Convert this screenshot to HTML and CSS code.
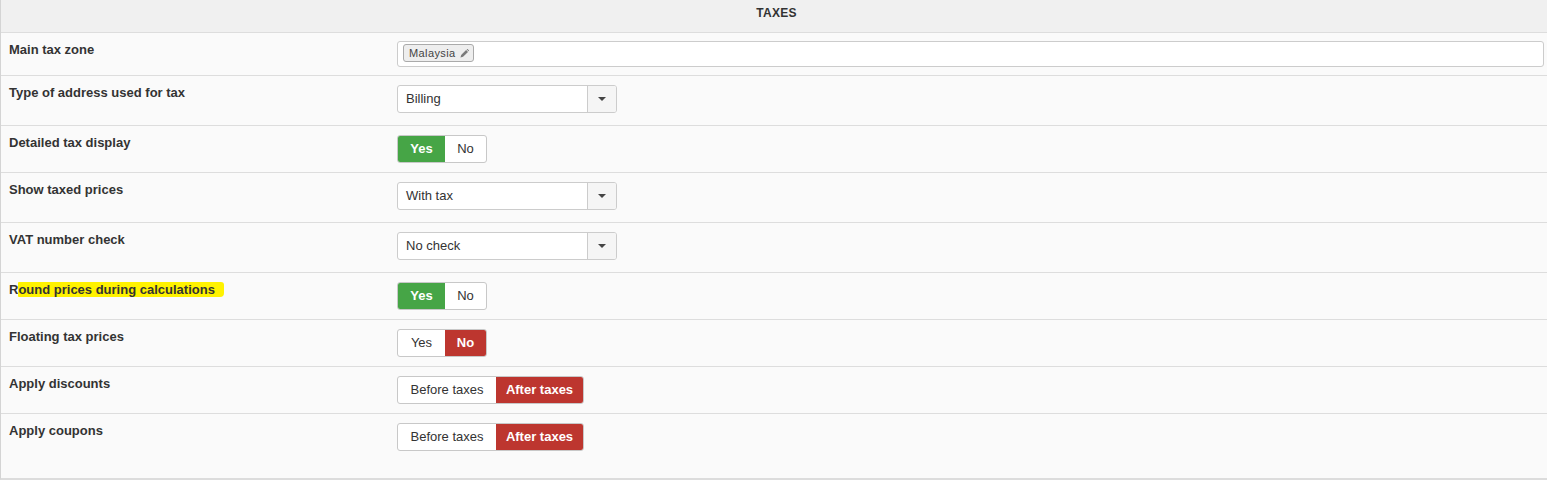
FILE: index.html
```html
<!DOCTYPE html>
<html>
<head>
	<title>Taxes</title>
	<meta http-equiv="content-type" content="text/html; charset=UTF-8">
	<link rel="stylesheet" href="styles.css">
</head>
<body>
	<div class="panel">
		<div class="panel-title">TAXES</div>

		<div class="row row-tight">
			<div class="key">Main tax zone</div>
			<div class="field">
				<div class="tagbox">
					<span class="tag">Malaysia
						<svg class="pencil" width="9" height="9" viewBox="0 0 10 10">
							<polygon points="0.5,9.5 1.3,6.6 6.8,1.1 8.9,3.2 3.4,8.7" fill="#7a7a7a"/>
							<polygon points="7.4,0.5 8.1,-0.2 10.2,1.9 9.5,2.6" fill="#7a7a7a"/>
						</svg>
					</span>
				</div>
			</div>
		</div>

		<div class="row row-select">
			<div class="key">Type of address used for tax</div>
			<div class="field">
				<div class="select"><span class="select-text">Billing</span><span class="select-arrow"><i class="caret"></i></span></div>
			</div>
		</div>

		<div class="row">
			<div class="key">Detailed tax display</div>
			<div class="field">
				<div class="btn-group">
					<span class="btn btn-yes active-yes">Yes</span><span class="btn btn-no">No</span>
				</div>
			</div>
		</div>

		<div class="row row-select">
			<div class="key">Show taxed prices</div>
			<div class="field">
				<div class="select"><span class="select-text">With tax</span><span class="select-arrow"><i class="caret"></i></span></div>
			</div>
		</div>

		<div class="row row-select">
			<div class="key">VAT number check</div>
			<div class="field">
				<div class="select"><span class="select-text">No check</span><span class="select-arrow"><i class="caret"></i></span></div>
			</div>
		</div>

		<div class="row">
			<div class="key">R<span class="marker">ound prices during calculations</span></div>
			<div class="field">
				<div class="btn-group">
					<span class="btn btn-yes active-yes">Yes</span><span class="btn btn-no">No</span>
				</div>
			</div>
		</div>

		<div class="row">
			<div class="key">Floating tax prices</div>
			<div class="field">
				<div class="btn-group">
					<span class="btn btn-yes">Yes</span><span class="btn btn-no active-no">No</span>
				</div>
			</div>
		</div>

		<div class="row">
			<div class="key">Apply discounts</div>
			<div class="field">
				<div class="btn-group">
					<span class="btn btn-before">Before taxes</span><span class="btn btn-after active-no">After taxes</span>
				</div>
			</div>
		</div>

		<div class="row row-last">
			<div class="key">Apply coupons</div>
			<div class="field">
				<div class="btn-group">
					<span class="btn btn-before">Before taxes</span><span class="btn btn-after active-no">After taxes</span>
				</div>
			</div>
		</div>
	</div>
</body>
</html>
```

FILE: styles.css
```css
*{
	box-sizing: border-box;
}

body{
	margin: 0;
	background: #fff;
	font-family: 'Liberation Sans', Arial, sans-serif;
	font-size: 13px;
	color: #333;
	overflow: hidden;
}

.panel{
	width: 100%;
	border-left: 1px solid #d4d4d4;
	border-bottom: 2px solid #dcdcdc;
	background: #fafafa;
}

.panel-title{
	background: #f0f0f0;
	border-bottom: 1px solid #ddd;
	text-align: center;
	font-weight: bold;
	font-size: 12px;
	line-height: 14px;
	padding: 6px 0 12px 5px;
	letter-spacing: 0.3px;
}

.row{
	display: flex;
	align-items: flex-start;
	padding: 9px 0 9px;
	border-bottom: 1px solid #ddd;
}

.row-tight{
	padding: 8px 0 8px;
}

.row-select{
	padding-bottom: 12px;
}

.row-last{
	border-bottom: none;
	padding-bottom: 27px;
}

.key{
	width: 396px;
	flex: none;
	padding-left: 8px;
	font-weight: bold;
	line-height: 16px;
}

.row-tight .key{
	padding-top: 1px;
}

.marker{
	background: #fff200;
	padding: 0 9px 0 0;
	border-radius: 1px 3px 4px 1px;
}

.field{
	flex: 1;
	padding-right: 3px;
}

/* tag input */

.tagbox{
	height: 26px;
	background: #fff;
	border: 1px solid #ccc;
	border-radius: 3px;
	padding: 2px 5px;
}

.tag{
	display: inline-flex;
	align-items: center;
	height: 18px;
	padding: 0 4px 0 5px;
	background: #eee;
	border: 1px solid #aaa;
	border-radius: 3px;
	font-size: 11px;
	letter-spacing: 0.4px;
	color: #444;
}

.pencil{
	margin-left: 4px;
}

/* select */

.select{
	display: flex;
	width: 220px;
	height: 28px;
	background: #fff;
	border: 1px solid #ccc;
	border-radius: 3px;
	overflow: hidden;
}

.select-text{
	flex: 1;
	padding-left: 8px;
	line-height: 26px;
}

.select-arrow{
	width: 29px;
	display: flex;
	align-items: center;
	justify-content: center;
	background: #f5f5f5;
	border-left: 1px solid #ccc;
}

.caret{
	width: 0;
	height: 0;
	border-left: 4px solid transparent;
	border-right: 4px solid transparent;
	border-top: 4px solid #444;
}

/* yes / no buttons */

.btn-group{
	display: inline-flex;
	height: 28px;
	border: 1px solid #c8c8c8;
	border-radius: 3px;
	overflow: hidden;
	background: #fff;
}

.btn{
	display: block;
	text-align: center;
	line-height: 26px;
	color: #333;
}

.btn-yes{
	width: 47px;
}

.btn-no{
	width: 41px;
}

.btn-before{
	width: 98px;
}

.btn-after{
	width: 87px;
}

.active-yes{
	background: #46a546;
	color: #fff;
	font-weight: bold;
}

.active-no{
	background: #bd362f;
	color: #fff;
	font-weight: bold;
}
```
